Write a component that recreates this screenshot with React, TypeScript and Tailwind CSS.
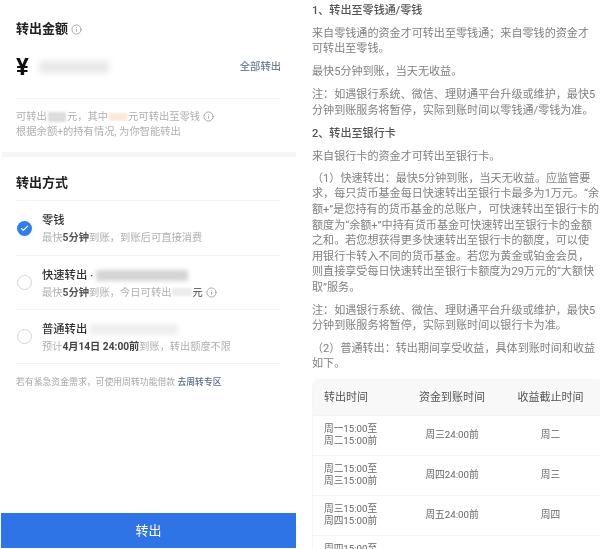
import { Check, Info } from "lucide-react";

const font = { fontFamily: 'Roboto, "Noto Sans CJK SC", sans-serif' };

const rows = [
  ["周一15:00至", "周二15:00前", "周三24:00前", "周二"],
  ["周二15:00至", "周三15:00前", "周四24:00前", "周三"],
  ["周三15:00至", "周四15:00前", "周五24:00前", "周四"],
  ["周四15:00至", "周五15:00前", "下周一24:00前", "周五"],
];

const Radio = ({ checked }: { checked?: boolean }) =>
  checked ? (
    <div className="flex h-[15px] w-[15px] shrink-0 items-center justify-center rounded-full bg-[#2f80ed]">
      <Check className="h-[9px] w-[9px] text-white" strokeWidth={3} />
    </div>
  ) : (
    <div className="h-[15px] w-[15px] shrink-0 rounded-full border border-[#d4d4d4]" />
  );

const App = () => {
  return (
    <div style={font} className="flex h-[549px] w-[600px] overflow-hidden bg-white blur-[0.4px]">
      {/* left: transfer form */}
      <div className="ml-px flex h-full w-[295px] shrink-0 flex-col">
        <section className="px-[15px] pt-[20px]">
          <div className="flex h-[18px] items-center gap-[3px]">
            <h2 className="text-[13px] leading-[18px] font-bold text-[#222]">转出金额</h2>
            <Info className="h-[11px] w-[11px] text-[#888]" strokeWidth={1.5} />
          </div>
          <div className="mt-[19px] flex h-[20px] items-center">
            <span className="w-[23px] text-[24px] leading-[20px] font-bold text-[#111]">¥</span>
            <div className="h-[12px] w-[70px] bg-[#e8e8e8] blur-[3px]" />
            <span className="ml-auto text-[10.3px] font-medium text-[#6e7f99]">全部转出</span>
          </div>
          <div className="mt-[21px] border-t border-[#f2f2f2]" />
          <div className="pt-[10px] text-[10.3px] leading-[15px] text-[#b0b0b0]">
            <div className="flex items-center whitespace-nowrap">
              可转出
              <span className="mx-px h-[10px] w-[18px] bg-[#dcdcdc] blur-[1px]" />
              元，其中
              <span className="mx-px h-[8px] w-[18px] bg-[#fbe8d6] blur-[1px]" />
              元可转出至零钱
              <Info className="ml-[3px] h-[11px] w-[11px] text-[#888]" strokeWidth={1.5} />
            </div>
            <div className="whitespace-nowrap">根据余额+的持有情况, 为你智能转出</div>
          </div>
        </section>

        <div className="mt-[13px] ml-px h-[5px] bg-[#f6f6f6]" />

        <section className="px-[15px] pt-[17px]">
          <h2 className="text-[13px] leading-[18px] font-bold text-[#222]">转出方式</h2>
          <div className="mt-[8px] border-t border-[#f2f2f2]" />

          <div className="flex h-[55px] items-center gap-[10px] border-b border-[#f2f2f2] pl-[1px]">
            <Radio checked />
            <div className="pt-[2px]">
              <div className="text-[11.3px] leading-[17px] font-medium text-[#333]">零钱</div>
              <div className="text-[10.3px] leading-[17px] whitespace-nowrap text-[#b0b0b0]">
                最快<b className="text-[#555]">5分钟</b>到账，到账后可直接消费
              </div>
            </div>
          </div>

          <div className="flex h-[54px] items-center gap-[10px] border-b border-[#f2f2f2] pl-[1px]">
            <Radio />
            <div className="pt-[2px]">
              <div className="flex items-center text-[11.3px] leading-[17px] font-medium text-[#333]">
                快速转出 ·<span className="ml-[3px] h-[11px] w-[92px] bg-[#d4d4d4] blur-[2px]" />
              </div>
              <div className="flex items-center text-[10.3px] leading-[17px] whitespace-nowrap text-[#b0b0b0]">
                <span>
                  最快<b className="text-[#555]">5分钟</b>到账，今日可转出
                </span>
                <span className="ml-[1px] h-[8px] w-[20px] bg-[#ececec] blur-[1px]" />
                <span className="text-[#444]">元</span>
                <Info className="ml-[3px] h-[11px] w-[11px] text-[#888]" strokeWidth={1.5} />
              </div>
            </div>
          </div>

          <div className="flex h-[54px] items-center gap-[10px] border-b border-[#f2f2f2] pl-[1px]">
            <Radio />
            <div className="pt-[2px]">
              <div className="flex items-center text-[11.3px] leading-[17px] font-medium text-[#333]">
                普通转出<span className="ml-[3px] h-[11px] w-[88px] bg-[#efefef] blur-[2px]" />
              </div>
              <div className="text-[10.2px] leading-[17px] whitespace-nowrap text-[#b0b0b0]">
                预计<b className="text-[#444]">4月14日 24:00前</b>到账，转出额度不限
              </div>
            </div>
          </div>

          <p className="mt-[12px] text-[8.85px] leading-[12px] whitespace-nowrap text-[#a8a8a8]">
            若有紧急资金需求，可使用周转功能借款 <span className="font-medium text-[#5b6d8f]">去周转专区</span>
          </p>
        </section>

        <button className="mt-auto mb-px flex h-[35px] shrink-0 items-center justify-center bg-[#2f74e6] text-[13px] text-white">
          转出
        </button>
      </div>

      {/* right: rules */}
      <div className="ml-[16px] flex min-w-0 flex-1 flex-col gap-[7px] pt-[3px] text-[11.08px] leading-[15.6px] whitespace-nowrap text-[#808080]">
        <h3 className="font-medium text-[#555]">1、转出至零钱通/零钱</h3>
        <p>
          来自零钱通的资金才可转出至零钱通；来自零钱的资金才
          <br />
          可转出至零钱。
        </p>
        <p>最快5分钟到账，当天无收益。</p>
        <p className="mt-px">
          注：如遇银行系统、微信、理财通平台升级或维护，最快5
          <br />
          分钟到账服务将暂停，实际到账时间以零钱通/零钱为准。
        </p>
        <h3 className="font-medium text-[#555]">2、转出至银行卡</h3>
        <p className="mt-px">来自银行卡的资金才可转出至银行卡。</p>
        <p className="-mt-px">
          （1）快速转出：最快5分钟到账，当天无收益。应监管要
          <br />
          求，每只货币基金每日快速转出至银行卡最多为1万元。“余
          <br />
          额+”是您持有的货币基金的总账户，可快速转出至银行卡的
          <br />
          额度为“余额+”中持有货币基金可快速转出至银行卡的金额
          <br />
          之和。若您想获得更多快速转出至银行卡的额度，可以使
          <br />
          用银行卡转入不同的货币基金。若您为黄金或铂金会员，
          <br />
          则直接享受每日快速转出至银行卡额度为29万元的“大额快
          <br />
          取”服务。
        </p>
        <p>
          注：如遇银行系统、微信、理财通平台升级或维护，最快5
          <br />
          分钟到账服务将暂停，实际到账时间以银行卡为准。
        </p>
        <p>
          （2）普通转出：转出期间享受收益，具体到账时间和收益
          <br />
          如下。
        </p>

        <div className="w-[291px] shrink-0 rounded-t-md border border-[#f6f6f6]">
          <div className="grid h-[35px] grid-cols-[92px_94px_1fr] items-center rounded-t-md bg-[#f8f8f8] text-[11px] text-[#555]">
            <span className="pl-[11px]">转出时间</span>
            <span className="text-center">资金到账时间</span>
            <span className="text-center">收益截止时间</span>
          </div>
          {rows.map((r) => (
            <div
              key={r[0]}
              className="grid h-[40px] grid-cols-[92px_94px_1fr] items-center border-t border-[#f3f3f3] text-[9.7px] leading-[12.7px] text-[#666]"
            >
              <span className="pl-[11px]">
                {r[0]}
                <br />
                {r[1]}
              </span>
              <span className="text-center">{r[2]}</span>
              <span className="text-center">{r[3]}</span>
            </div>
          ))}
        </div>
      </div>
    </div>
  );
};

export default App;
